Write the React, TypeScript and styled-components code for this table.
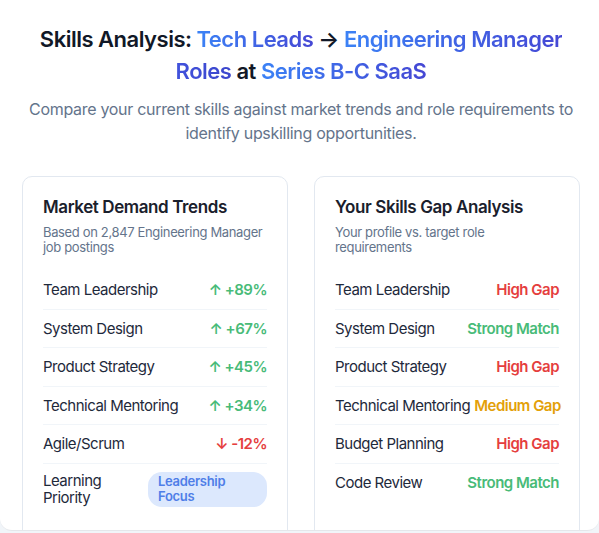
import React from 'react';
import styled, { createGlobalStyle } from 'styled-components';

type Tone = 'up' | 'down' | 'high' | 'medium' | 'strong';

interface Row {
  label: string;
  value: string;
  tone: Tone;
}

const toneColors: Record<Tone, string> = {
  up: '#48bb78',
  down: '#e53e3e',
  high: '#e53e3e',
  medium: '#e3a008',
  strong: '#48bb78'
};

const GlobalStyle = createGlobalStyle`
  * { box-sizing: border-box; }
  body {
    margin: 0;
    background: #f1f5f9;
    font-family: Inter, "Noto Sans", sans-serif;
    -webkit-font-smoothing: antialiased;
  }
`;

const marketRows: Row[] = [
  { label: 'Team Leadership', value: '↑ +89%', tone: 'up' },
  { label: 'System Design', value: '↑ +67%', tone: 'up' },
  { label: 'Product Strategy', value: '↑ +45%', tone: 'up' },
  { label: 'Technical Mentoring', value: '↑ +34%', tone: 'up' },
  { label: 'Agile/Scrum', value: '↓ -12%', tone: 'down' }
];

const gapRows: Row[] = [
  { label: 'Team Leadership', value: 'High Gap', tone: 'high' },
  { label: 'System Design', value: 'Strong Match', tone: 'strong' },
  { label: 'Product Strategy', value: 'High Gap', tone: 'high' },
  { label: 'Technical Mentoring', value: 'Medium Gap', tone: 'medium' },
  { label: 'Budget Planning', value: 'High Gap', tone: 'high' },
  { label: 'Code Review', value: 'Strong Match', tone: 'strong' }
];

const App: React.FC = () => {
  return (
    <>
      <GlobalStyle />
      <Page>
        <Header>
          <Title>
            Skills Analysis: <Accent>Tech Leads</Accent> → <Accent>Engineering Manager</Accent>{' '}
            <Accent $deep>Roles</Accent> at <Accent>Series B-C SaaS</Accent>
          </Title>
          <Intro>
            Compare your current skills against market trends and role requirements to identify upskilling
            opportunities.
          </Intro>
        </Header>

        <Grid>
          <Card>
            <CardTitle>Market Demand Trends</CardTitle>
            <CardSub>Based on 2,847 Engineering Manager job postings</CardSub>
            <List>
              {marketRows.map((row) => (
                <ListRow key={row.label}>
                  <Label>{row.label}</Label>
                  <Value $tone={row.tone}>{row.value}</Value>
                </ListRow>
              ))}
              <ListRow $last>
                <PriorityLabel>Learning Priority</PriorityLabel>
                <Badge>Leadership Focus</Badge>
              </ListRow>
            </List>
          </Card>

          <Card>
            <CardTitle>Your Skills Gap Analysis</CardTitle>
            <CardSub>Your profile vs. target role requirements</CardSub>
            <List>
              {gapRows.map((row, i) => (
                <ListRow key={row.label} $last={i === gapRows.length - 1}>
                  <Label>{row.label}</Label>
                  <Value $tone={row.tone}>{row.value}</Value>
                </ListRow>
              ))}
            </List>
          </Card>
        </Grid>
      </Page>
    </>
  );
};

const Page = styled.main`
  height: 531px;
  overflow: hidden;
  background: #ffffff;
  border-bottom: 1px solid #e5e7eb;
  border-radius: 0 0 12px 12px;
  padding: 23px 19px 0 22px;
`;

const Header = styled.header`
  text-align: center;
  margin-bottom: 31px;
`;

const Title = styled.h1`
  margin: 0 0 10px;
  font-size: 22px;
  line-height: 32px;
  font-weight: 600;
  color: #111827;
  letter-spacing: -0.5px;
`;

const Accent = styled.span<{ $deep?: boolean }>`
  background: ${({ $deep }) =>
    $deep ? 'linear-gradient(90deg, #4152dc, #3b46cc)' : 'linear-gradient(90deg, #3b82f6, #4547d4)'};
  -webkit-background-clip: text;
  background-clip: text;
  color: transparent;
`;

const Intro = styled.p`
  margin: 0 auto;
  max-width: 556px;
  font-size: 16px;
  line-height: 24px;
  color: #64748b;
  letter-spacing: -0.3px;
`;

const Grid = styled.div`
  display: grid;
  grid-template-columns: minmax(0, 1fr) minmax(0, 1fr);
  gap: 26px;
`;

const Card = styled.section`
  background: #ffffff;
  border: 1px solid #e2e8f0;
  border-radius: 10px;
  padding: 18px 20px 24px;
  min-height: 400px;
`;

const CardTitle = styled.h2`
  margin: 0;
  font-size: 17px;
  line-height: 24px;
  font-weight: 600;
  color: #1a202c;
  letter-spacing: -0.4px;
`;

const CardSub = styled.p`
  margin: 6px 0 16px;
  font-size: 13px;
  line-height: 15px;
  color: #64748b;
  letter-spacing: -0.35px;
`;

const List = styled.div`
  display: flex;
  flex-direction: column;
`;

const ListRow = styled.div<{ $last?: boolean }>`
  display: flex;
  align-items: center;
  justify-content: space-between;
  gap: 4px;
  padding: 8px 0;
  border-bottom: ${({ $last }) => ($last ? 'none' : '1px solid #f1f5f9')};
`;

const Label = styled.span`
  font-size: 15px;
  line-height: 21.5px;
  color: #1e293b;
  letter-spacing: -0.5px;
  white-space: nowrap;
`;

const PriorityLabel = styled(Label)`
  white-space: normal;
  line-height: 17px;
  max-width: 80px;
`;

const Value = styled.span<{ $tone: Tone }>`
  font-size: 15px;
  line-height: 21.5px;
  font-weight: 600;
  white-space: nowrap;
  letter-spacing: -0.5px;
  color: ${({ $tone }) => toneColors[$tone]};
`;

const Badge = styled.span`
  width: 119px;
  flex-shrink: 0;
  padding: 2px 10px 3px;
  border-radius: 14px;
  background: #dce8fd;
  color: #4f7ee8;
  font-size: 13px;
  line-height: 15px;
  font-weight: 600;
  letter-spacing: -0.3px;
`;

export default App;
